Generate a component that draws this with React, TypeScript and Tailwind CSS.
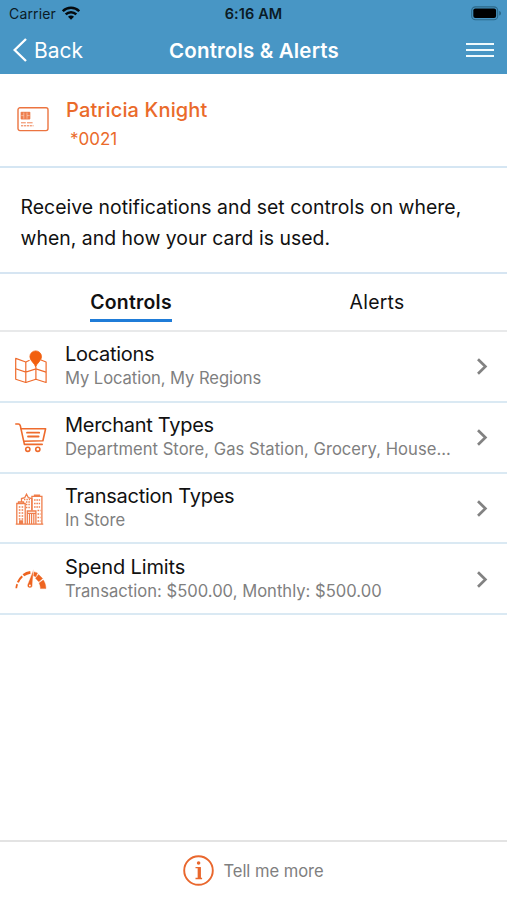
import { useState, type ReactNode } from 'react';

type TabKey = 'controls' | 'alerts';

function WifiIcon() {
  return (
    <svg width="18" height="14" viewBox="0 0 18 14" fill="none" stroke="#050a0e" strokeWidth="2.5" className="-translate-y-px">
      <path d="M0.8 5.2a11.6 11.6 0 0 1 16.4 0" />
      <path d="M3.7 8.4a7.5 7.5 0 0 1 10.6 0" />
      <path d="M9 13.8 6 10.8a4.2 4.2 0 0 1 6 0Z" fill="#050a0e" stroke="none" />
    </svg>
  );
}

function BatteryIcon() {
  return (
    <svg width="31" height="15" viewBox="0 0 31 15" fill="none" className="-translate-y-px">
      <rect x="0.7" y="0.9" width="26" height="12.8" rx="3.8" stroke="#2b6888" strokeWidth="1.1" />
      <rect x="2.3" y="2.5" width="22.8" height="9.6" rx="2" fill="#000" />
      <path d="M28.2 5v4.6c1.2-.4 1.8-1.2 1.8-2.3s-.6-1.9-1.8-2.3Z" fill="#2b6888" />
    </svg>
  );
}

function CardIcon() {
  return (
    <svg width="32" height="25" viewBox="0 0 32 25" fill="none" stroke="#ec7440">
      <rect x="1" y="0.8" width="30" height="22.8" rx="2" strokeWidth="1.4" />
      <rect x="3.9" y="5" width="9.2" height="7.2" rx="0.6" fill="#ee8050" strokeWidth="0.4" />
      <path d="M6.8 5.5v6.2M10 5.5v6.2M4.3 8.6h2.5M10 8.6h2.7" stroke="#fbd9c8" strokeWidth="0.6" />
      <path d="M4 15.8h4.8M10 15.8h5.6" strokeWidth="0.9" />
      <path d="M4 18.8h12.5" strokeWidth="1" strokeDasharray="2.2 0.7" />
    </svg>
  );
}

function MapIcon() {
  return (
    <svg width="32" height="34" viewBox="0 0 32 34" fill="none" stroke="#ef6a2b" strokeWidth="1.2" className="translate-y-px">
      <path d="M14.6 10.3 10.8 12 .7 8.4v20.8l10.1 3.3 10.1-3.3 10.2 3.3V12L26 10" strokeLinejoin="round" />
      <path d="M10.8 12v20.5M20.9 17v12.2M.7 18.7l10.1 3.4 10.1-3.2 10.2 3.2" />
      <path d="M20.7 17c-1-4-5.8-6-5.8-10.3a5.8 5.8 0 0 1 11.6 0C26.5 11 21.7 13 20.7 17Z" fill="#f2600f" stroke="#f2600f" strokeWidth="0.8" />
    </svg>
  );
}

function CartIcon() {
  return (
    <svg width="32" height="30" viewBox="0 0 32 30" fill="none" stroke="#ee6b2d" strokeWidth="1.6" strokeLinecap="round" strokeLinejoin="round" className="translate-y-px">
      <path d="M.8 1h2.6c1.2 0 1.6.7 1.9 1.7L9.4 21.4H27.2" />
      <path d="M6 5.8h24.6l-2.7 11.9L8.8 18.3" />
      <path d="M12 9.7h12.2M13 13.5h10.6" strokeWidth="1.8" />
      <circle cx="12.8" cy="26.3" r="2.1" />
      <circle cx="22.8" cy="26.3" r="2.1" />
    </svg>
  );
}

function BuildingsIcon() {
  return (
    <svg width="28" height="32" viewBox="0 0 28 32" fill="none" stroke="#ef7d4a" strokeWidth="1.3" className="translate-x-[0.5px] translate-y-px">
      <path d="M0 31.2h28M1.3 31V10.5h8.4V31" />
      <path d="M3 10.5V9h5v1.5M6 9V5.6L9.2 4.7 11 1.2l1.9 3.5L16.4 5.7V17.5" />
      <path d="M16.4 17.5V3.4h10V31M19 3.4V2.2h5v1.2" />
      <path d="M11.8 31V18h8.6v13M11.8 20.4h8.6" />
      <path d="M14 21v10M16.1 21v10M18.3 21v10" strokeWidth="1.2" />
      <path d="M3.3 14h4.6M3.3 17h4.6M3.3 20h4.6M3.3 23h4.6M3.3 26h4.6" strokeDasharray="1.6 1.2" />
      <path d="M8.5 6.5h6M10.5 9h4.5M10.5 11.5h4.5M10.5 14.5h4.5" strokeDasharray="1.4 1" />
      <path d="M18.6 7h6M18.6 10.5h6M18.6 14h6M22 17.5h3M22 21h3M22 24.5h3M22 28h3" strokeDasharray="1.5 0.8" />
      <path d="M4.2 31v-3h2.8v3" fill="#ef7d4a" />
    </svg>
  );
}

function GaugeIcon() {
  return (
    <svg width="32" height="22" viewBox="0 0 32 22" fill="none" stroke="#ee6420" className="translate-y-px">
      <path d="M1.3 19.2c.1-1.5.4-2.8.9-4.1" strokeWidth="1.7" />
      <path d="M2.9 13.4C4 10.9 5.3 9 7.2 7.3" strokeWidth="2.2" />
      <path d="M8.4 6.3c2.1-1.6 4.3-2.5 7-2.9" strokeWidth="2.7" />
      <path d="M18.9 2.9c1.2.2 2.4.6 3.6 1.1l-1.6 3.7-2.6-.9Z" fill="#ee6420" strokeWidth="0.4" />
      <path d="m23.6 5.5 4 4-3.8 3.2-3.3-3.4Z" fill="#ee6420" strokeWidth="0.4" />
      <path d="M28.3 11c1.7 2.4 2.5 5.2 2.6 8.6h-5.4c-.1-2.1-.5-3.8-1.4-5.6Z" fill="#ee6420" strokeWidth="0.4" />
      <path d="m18.6 0-6.2 15.7c-1 3 3.800 4.600 5 1.500Z" fill="#ee6420" stroke="#fff" strokeWidth="0.5" />
      <circle cx="14.9" cy="16.5" r="0.9" fill="#fff" stroke="none" />
    </svg>
  );
}

function InfoIcon() {
  return (
    <svg width="31" height="31" viewBox="0 0 31 31" fill="none" className="-translate-y-px">
      <circle cx="15.5" cy="15.5" r="14.3" stroke="#e9672d" strokeWidth="1.9" />
      <circle cx="15.6" cy="8" r="1.8" fill="#e9672d" />
      <path d="M12.500 12.600h4.700v10.300M12.500 23.500h6.600" stroke="#e9672d" strokeWidth="1.3" />
      <path d="M16.1 12.6v10.9" stroke="#e9672d" strokeWidth="2.9" />
    </svg>
  );
}

const ITEMS: { title: string; detail: string; titleClass: string; detailClass: string; icon: ReactNode }[] = [
  { title: 'Locations', detail: 'My Location, My Regions', titleClass: 'tracking-[-0.3px]', detailClass: 'tracking-[-0.07px]', icon: <MapIcon /> },
  { title: 'Merchant Types', detail: 'Department Store, Gas Station, Grocery, House...', titleClass: 'tracking-[-0.28px]', detailClass: 'tracking-[0.03px]', icon: <CartIcon /> },
  { title: 'Transaction Types', detail: 'In Store', titleClass: 'tracking-[-0.26px]', detailClass: 'tracking-[-0.05px]', icon: <BuildingsIcon /> },
  { title: 'Spend Limits', detail: 'Transaction: $500.00, Monthly: $500.00', titleClass: 'tracking-[-0.15px]', detailClass: 'tracking-[0.01px]', icon: <GaugeIcon /> },
];

export default function App() {
  const [tab, setTab] = useState<TabKey>('controls');

  return (
    <div className="flex h-[900px] w-[507px] flex-col overflow-hidden bg-white font-['Inter',sans-serif] text-[#111]">
      <header className="h-[74px] shrink-0 bg-[#4896c5]">
        {/* Status bar */}
        <div className="grid h-7 grid-cols-[1fr_auto_1fr] items-center pl-[9px] pr-[5px] text-[14px] text-[#0b1b26]">
          <div className="flex items-center gap-1.5">
            <span className="pb-px tracking-[0.15px]">Carrier</span>
            <WifiIcon />
          </div>
          <span className="-ml-1 text-center text-[14.5px] font-semibold tracking-[0.1px]">6:16 AM</span>
          <div className="flex justify-end">
            <BatteryIcon />
          </div>
        </div>
        {/* Navigation */}
        <div className="grid h-11 grid-cols-[1fr_auto_1fr] items-center px-[13px] text-white">
          <button type="button" className="flex items-center gap-[7px] text-[21px]">
            <svg width="14" height="24" viewBox="0 0 14 24" fill="none" stroke="#fff" strokeWidth="2.4">
              <path d="M13 1 1.6 12 13 23" />
            </svg>
            <span className="pt-0.5">Back</span>
          </button>
          <h1 className="pl-px pt-[2px] text-[20.5px] font-semibold tracking-[0.15px]">Controls &amp; Alerts</h1>
          <button type="button" aria-label="Menu" className="flex flex-col gap-1 justify-self-end">
            <span className="h-0.5 w-7 bg-[#f0fafd]" />
            <span className="h-0.5 w-7 bg-[#f0fafd]" />
            <span className="h-0.5 w-7 bg-[#f0fafd]" />
          </button>
        </div>
      </header>

      <section className="flex h-[94px] shrink-0 items-start border-b-2 border-[#d5e6f3] pl-[17px] text-[#ea6a2a]">
        <div className="mt-[33px] w-[49px]">
          <CardIcon />
        </div>
        <div className="pt-[22px]">
          <p className="text-[20px] font-medium leading-7 tracking-[0.15px]">Patricia Knight</p>
          <p className="mt-[3px] pl-1 text-[17px] leading-6">*0021</p>
        </div>
      </section>

      <p className="h-[106px] shrink-0 border-b-2 border-[#d6e5f2] pl-[20.5px] pt-6 text-[19.4px] leading-[31px] tracking-[0.03px]">
        Receive notifications and set controls on where,
        <br />
        when, and how your card is used.
      </p>

      <div className="grid h-[58px] shrink-0 grid-cols-2 border-b-2 border-[#e8e9ea] pl-2 pr-[7px] text-[19.4px] tracking-[0.25px]">
        {(['controls', 'alerts'] as TabKey[]).map((key) => (
          <button key={key} type="button" onClick={() => setTab(key)} className="flex items-start justify-center pt-[12px]">
            <span
              className={`h-[36px] border-b-[3px] leading-[33px] ${
                tab === key ? 'border-[#1f7cd8] font-semibold' : 'border-transparent'
              }`}
            >
              {key === 'controls' ? 'Controls' : 'Alerts'}
            </span>
          </button>
        ))}
      </div>

      <div className="flex-1">
        {ITEMS.map((item) => (
          <button
            key={item.title}
            type="button"
            className="flex h-[70.8px] w-full items-center border-b-2 border-[#dae9f3] pl-[15px] pr-[19px] text-left"
          >
            <span className="w-[50px] shrink-0">{item.icon}</span>
            <span className="flex-1 whitespace-nowrap pb-0.5">
              <span className={`block text-[20px] leading-[26px] ${item.titleClass}`}>{item.title}</span>
              <span className={`block text-[16.6px] leading-[22px] text-[#7f7f7f] ${item.detailClass}`}>{item.detail}</span>
            </span>
            <svg width="12" height="18" viewBox="0 0 12 18" fill="none" stroke="#828282" strokeWidth="2.7">
              <path d="m2 2.200 7.400 7.300L2 16.800" />
            </svg>
          </button>
        ))}
      </div>

      <footer className="flex h-[60px] shrink-0 items-center justify-center gap-[9px] border-t-2 border-[#e3e3e3] text-[16.6px] text-[#7f7f7f]">
        <InfoIcon />
        <span className="tracking-[-0.05px]">Tell me more</span>
      </footer>
    </div>
  );
}
